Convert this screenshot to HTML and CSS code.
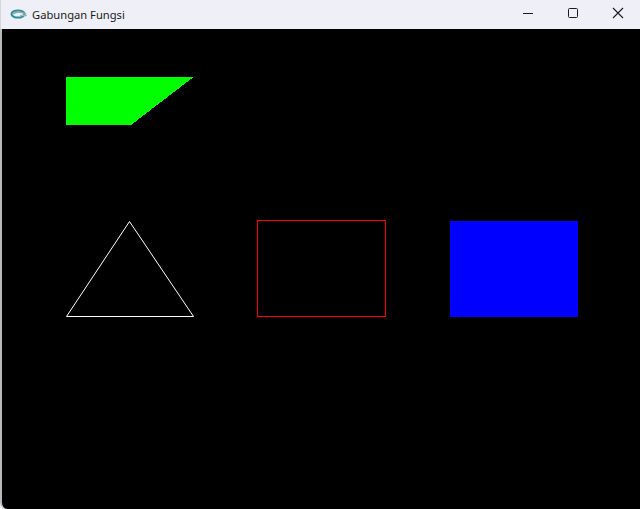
FILE: index.html
```html
<!DOCTYPE html>
<html>
<head>
<meta charset="utf-8">
<title>Gabungan Fungsi</title>
<link rel="stylesheet" href="styles.css">
</head>
<body>
<div class="window">
  <div class="titlebar">
    <div class="title-left">
      <svg class="app-icon" width="18" height="12" viewBox="0 0 18 12">
        <ellipse cx="8" cy="6" rx="6.5" ry="3.6" fill="none" stroke="#2f8f93" stroke-width="2"/>
        <path d="M3 6 C6 3.5 11 3.5 16 6" fill="none" stroke="#7fa9b3" stroke-width="1.5"/>
        <path d="M10 7.5 L17 7.5" stroke="#9bb6bd" stroke-width="1.3"/>
      </svg>
      <span class="title-text">Gabungan Fungsi</span>
    </div>
    <div class="controls">
      <div class="ctrl">
        <svg width="12" height="12" viewBox="0 0 12 12"><path d="M1 6.5 H11" stroke="#1b1b1b" stroke-width="1"/></svg>
      </div>
      <div class="ctrl">
        <svg width="12" height="12" viewBox="0 0 12 12"><rect x="1.5" y="1.5" width="9" height="9" rx="1" fill="none" stroke="#1b1b1b" stroke-width="1"/></svg>
      </div>
      <div class="ctrl">
        <svg width="12" height="12" viewBox="0 0 12 12"><path d="M1 1 L11 11 M11 1 L1 11" stroke="#1b1b1b" stroke-width="1.1"/></svg>
      </div>
    </div>
  </div>
  <div class="client">
    <svg class="canvas" width="638" height="480" viewBox="2 29 638 480" shape-rendering="crispEdges">
      <polygon points="66,77 193.5,77 131,125 66,125" fill="#00ff00"/>
      <polygon points="129.5,221.5 66.5,316.5 193.5,316.5" fill="none" stroke="#ffffff" stroke-width="1" shape-rendering="auto"/>
      <rect x="257.5" y="220.5" width="128" height="96" fill="none" stroke="#ff0000" stroke-width="1"/>
      <rect x="450" y="221" width="128" height="96" fill="#0000ff"/>
    </svg>
  </div>
</div>
</body>
</html>
```
FILE: styles.css
```css
html, body {
  margin: 0;
  padding: 0;
  background: #eeeff7;
}
.window {
  width: 640px;
  height: 509px;
  display: flex;
  flex-direction: column;
  overflow: hidden;
}
.titlebar {
  height: 29px;
  flex: 0 0 29px;
  background: #eeeff7;
  display: flex;
  justify-content: space-between;
  align-items: stretch;
  border-left: 1px solid #d6d7de;
}
.title-left {
  display: flex;
  align-items: center;
  padding-left: 9px;
}
.app-icon {
  display: block;
  margin-right: 4px;
  margin-top: -1px;
}
.title-text {
  font-family: "Noto Sans", "Open Sans", sans-serif;
  font-size: 11.2px;
  color: #1a1a1a;
  margin-top: -1px;
}
.controls {
  display: flex;
}
.ctrl {
  width: 45px;
  display: flex;
  align-items: center;
  justify-content: center;
  padding-bottom: 3px;
}
.ctrl svg {
  display: block;
}
.client {
  flex: 1;
  background: #000000;
  border-left: 2px solid #b9b9b9;
  border-bottom-left-radius: 7px;
  overflow: hidden;
}
.canvas {
  display: block;
}
```
